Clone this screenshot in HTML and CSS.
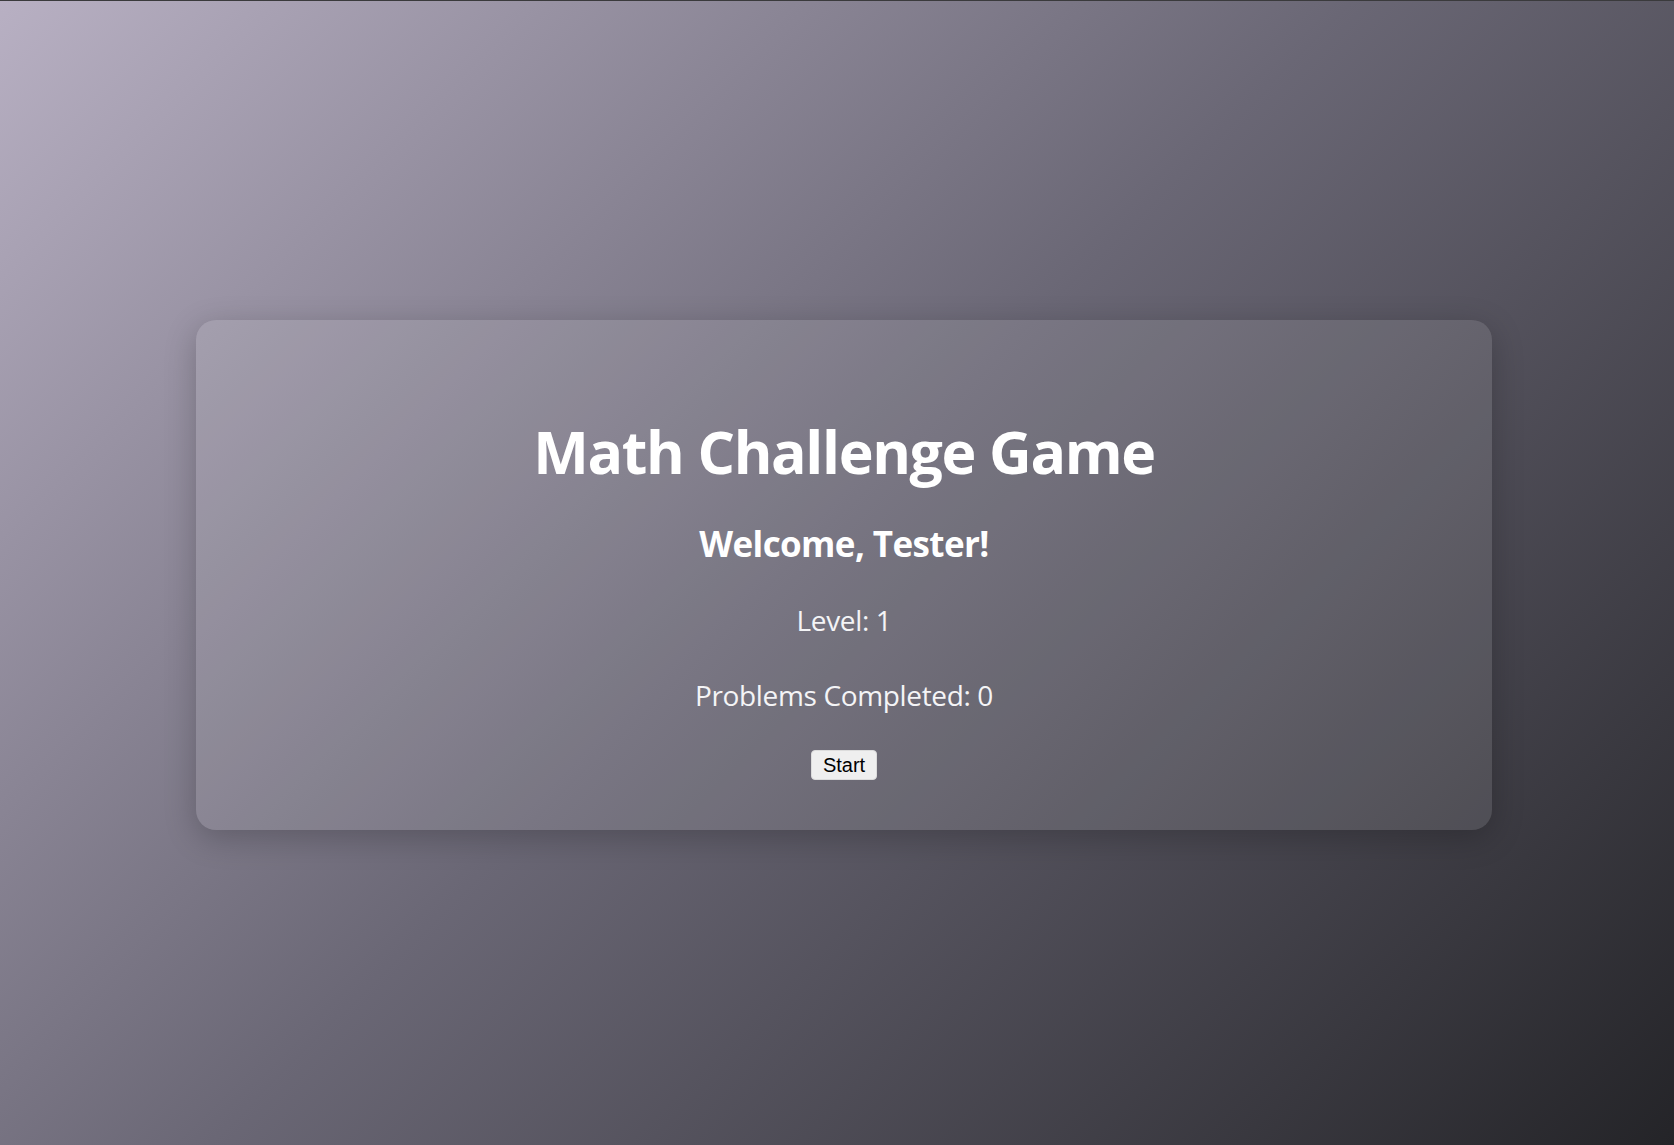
FILE: index.html
```html
<!DOCTYPE html>
<html lang="en">
<head>
<meta charset="utf-8">
<title>Math Challenge Game</title>
<link rel="stylesheet" href="styles.css">
</head>
<body>
  <main class="card">
    <h1 class="title">Math Challenge Game</h1>
    <h2 class="welcome">Welcome, Tester!</h2>
    <p class="stat stat-level">Level: 1</p>
    <p class="stat stat-problems">Problems Completed: 0</p>
    <button class="start-btn" type="button">Start</button>
  </main>
</body>
</html>
```

FILE: styles.css
```css
* {
  box-sizing: border-box;
}

html {
  height: 100%;
}

body {
  margin: 0;
  min-height: 100vh;
  border-top: 1px solid #3a3a3c;
  padding: 4px 0 0 14px;
  display: flex;
  align-items: center;
  justify-content: center;
  background: linear-gradient(135deg, #b8b0c3 0%, #6a6775 48%, #242428 100%);
  font-family: "Open Sans", "Noto Sans", sans-serif;
  color: #ffffff;
}

.card {
  width: 1296px;
  height: 510px;
  padding: 95px 20px 0;
  display: flex;
  flex-direction: column;
  align-items: center;
  background: rgba(255, 255, 255, 0.1);
  border-radius: 20px;
  box-shadow: 0 8px 32px rgba(0, 0, 0, 0.22);
  text-align: center;
}

.title {
  margin: 0;
  font-size: 59px;
  line-height: 72px;
  font-weight: 700;
  letter-spacing: -1.35px;
}

.welcome {
  margin: 35px 0 0;
  font-size: 35px;
  line-height: 44px;
  font-weight: 700;
  letter-spacing: -0.6px;
}

.stat {
  margin: 0;
  font-size: 28px;
  line-height: 36px;
  font-weight: 400;
  letter-spacing: -0.35px;
  color: #f4f4f6;
}

.stat-level {
  margin-top: 36px;
}

.stat-problems {
  margin-top: 39px;
}

.start-btn {
  margin-top: 37px;
  height: 30px;
  padding: 0 11px;
  border: 1px solid #dcdcdc;
  border-radius: 4px;
  background: #efefef;
  color: #000000;
  font-family: "Liberation Sans", Arial, sans-serif;
  font-size: 20px;
  line-height: 28px;
  cursor: pointer;
}
```
